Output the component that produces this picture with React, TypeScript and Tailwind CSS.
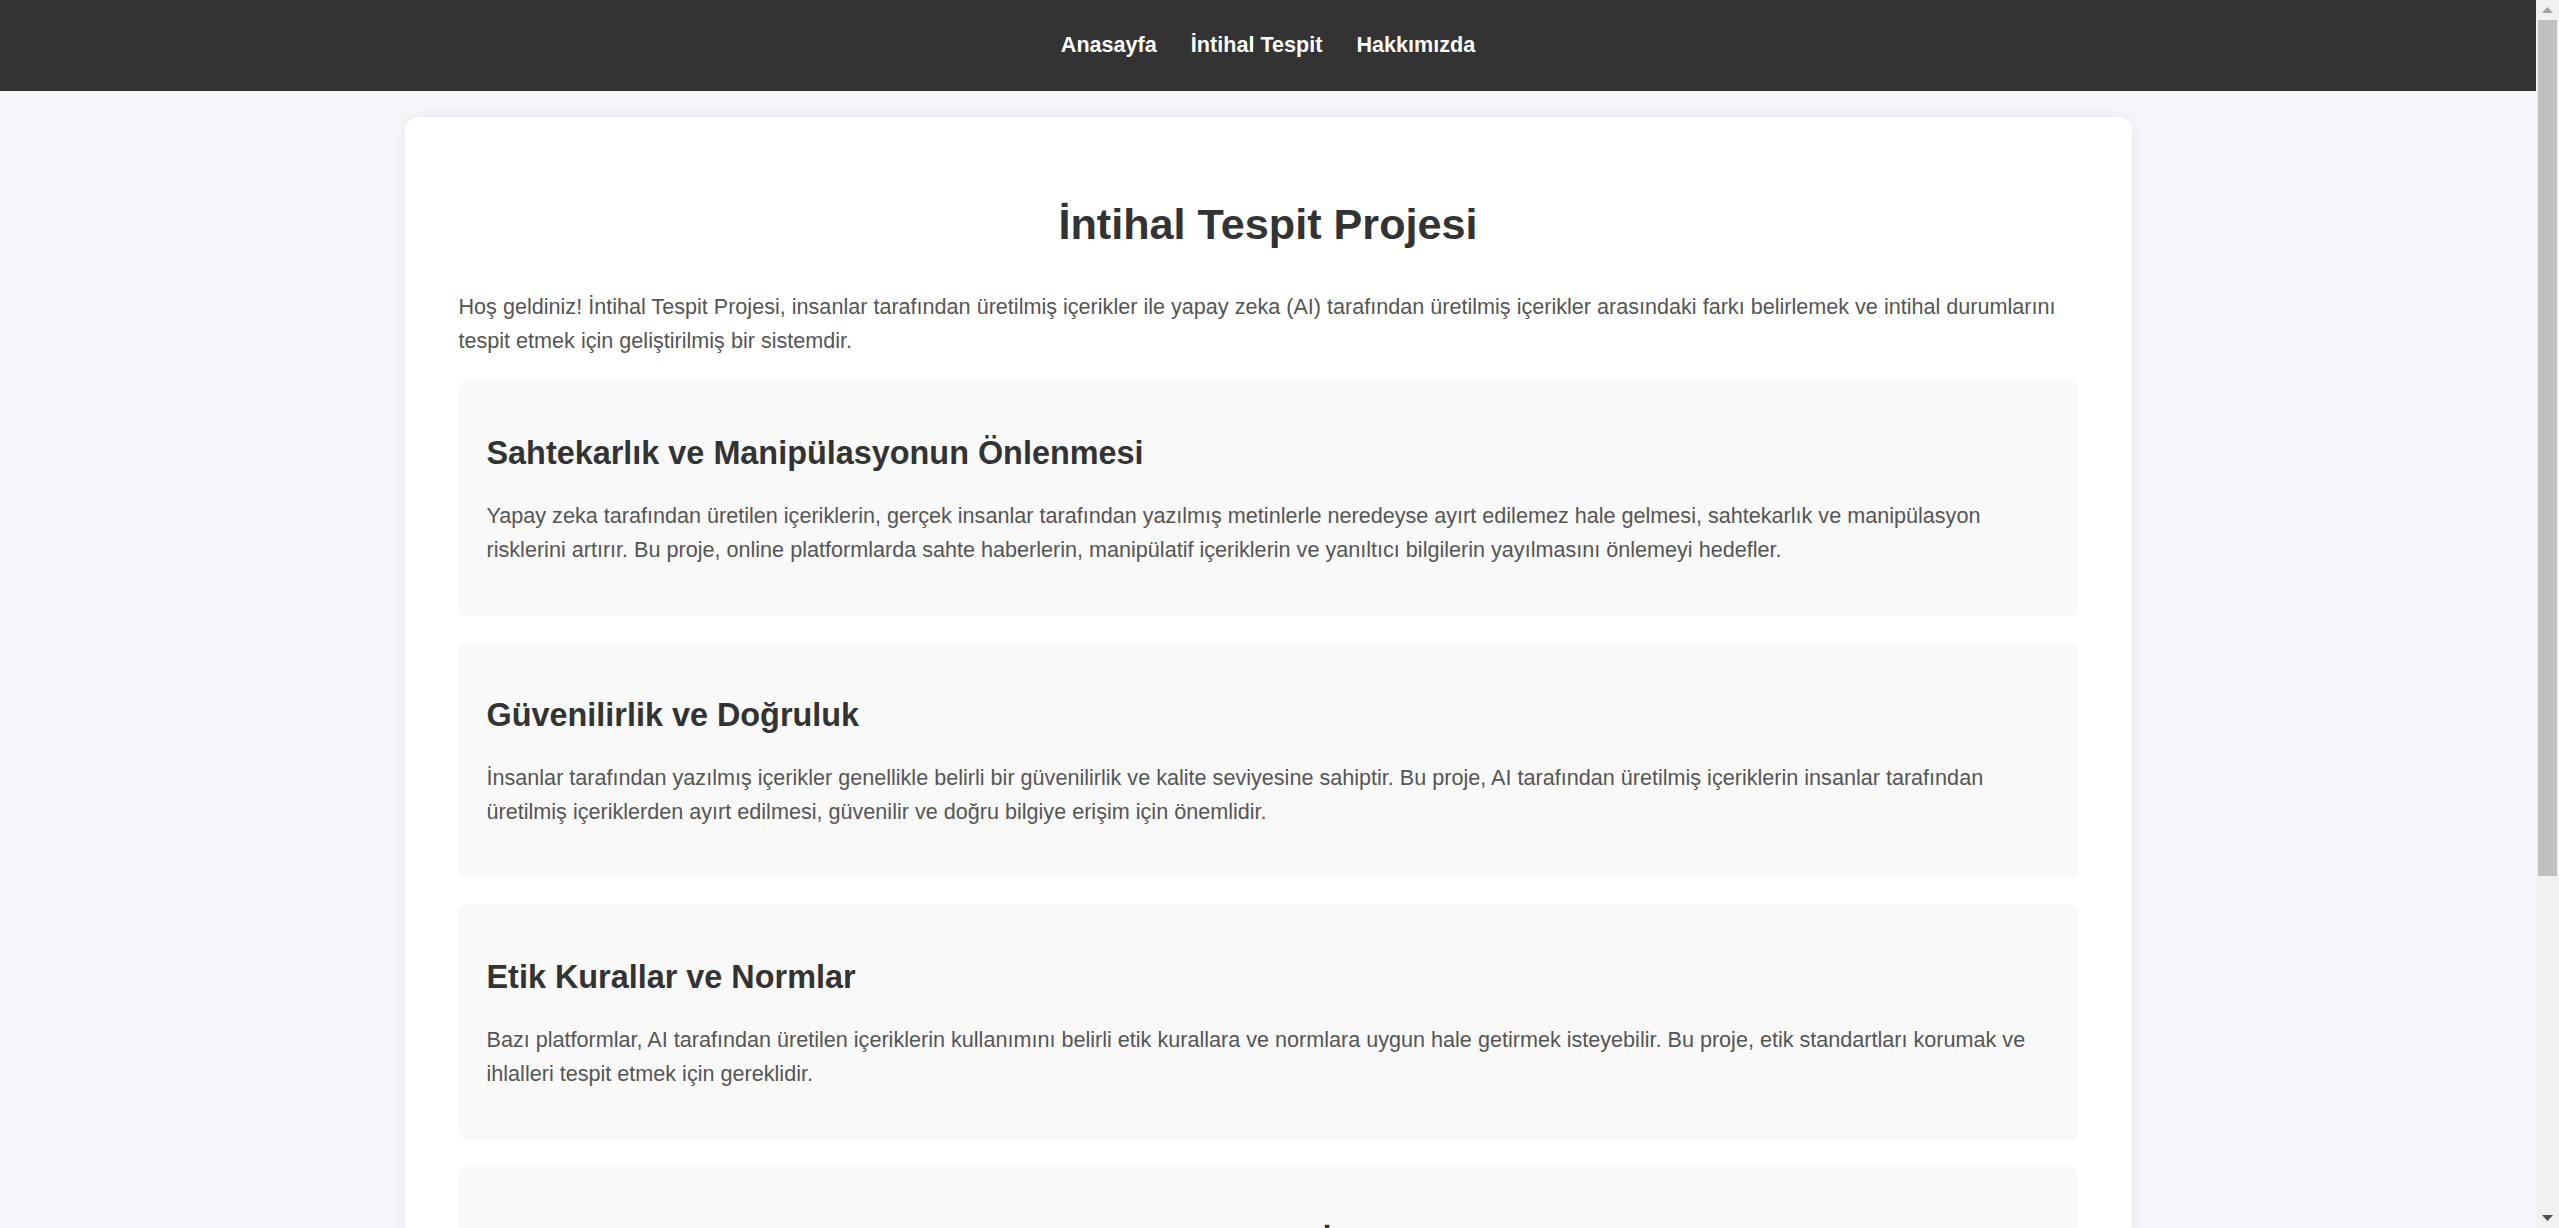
import React from "react";

const sections = [
  {
    title: "Sahtekarlık ve Manipülasyonun Önlenmesi",
    text: "Yapay zeka tarafından üretilen içeriklerin, gerçek insanlar tarafından yazılmış metinlerle neredeyse ayırt edilemez hale gelmesi, sahtekarlık ve manipülasyon risklerini artırır. Bu proje, online platformlarda sahte haberlerin, manipülatif içeriklerin ve yanıltıcı bilgilerin yayılmasını önlemeyi hedefler.",
    center: false,
  },
  {
    title: "Güvenilirlik ve Doğruluk",
    text: "İnsanlar tarafından yazılmış içerikler genellikle belirli bir güvenilirlik ve kalite seviyesine sahiptir. Bu proje, AI tarafından üretilmiş içeriklerin insanlar tarafından üretilmiş içeriklerden ayırt edilmesi, güvenilir ve doğru bilgiye erişim için önemlidir.",
    center: false,
  },
  {
    title: "Etik Kurallar ve Normlar",
    text: "Bazı platformlar, AI tarafından üretilen içeriklerin kullanımını belirli etik kurallara ve normlara uygun hale getirmek isteyebilir. Bu proje, etik standartları korumak ve ihlalleri tespit etmek için gereklidir.",
    center: false,
  },
  {
    title: "Telif Hakkı ve İhlaller",
    text: "Akademik ve yaratıcı çalışmalarda telif haklarının korunması büyük önem taşır. Bu proje, izinsiz kopyalanan ve yapay zeka ile yeniden üretilen içeriklerin tespit edilmesine yardımcı olur.",
    center: true,
  },
];

function Scrollbar() {
  return (
    <div className="w-[23px] shrink-0 h-full bg-[#f1f1f1] flex flex-col">
      <div className="h-[20px] flex items-center justify-center">
        <svg width="11" height="6" viewBox="0 0 11 6">
          <polygon points="5.5,0 11,6 0,6" fill="#a3a3a3" />
        </svg>
      </div>
      <div className="h-[856px] mx-[2px] bg-[#c1c1c1]" />
      <div className="flex-1" />
      <div className="h-[20px] flex items-center justify-center">
        <svg width="11" height="6" viewBox="0 0 11 6">
          <polygon points="0,0 11,0 5.5,6" fill="#505050" />
        </svg>
      </div>
    </div>
  );
}

export default function App() {
  return (
    <div className="flex h-screen overflow-hidden bg-[#f5f7fa] font-['Liberation_Sans',Arial,sans-serif]">
      <div className="flex-1 min-w-0 h-full overflow-hidden">
        <nav className="h-[91px] pb-[2px] bg-[#333333] flex items-center justify-center gap-[34px]">
          <a className="text-[21.6px] leading-[25px] font-bold text-white">Anasayfa</a>
          <a className="text-[21.6px] leading-[25px] font-bold text-white">İntihal Tespit</a>
          <a className="text-[21.6px] leading-[25px] font-bold text-white">Hakkımızda</a>
        </nav>
        <main className="w-[1727px] mx-auto mt-[26px] bg-white rounded-[13px] shadow-[0_0_14px_rgba(0,0,0,0.08)] px-[54px] pt-[83px] pb-[54px]">
          <h1 className="text-[43.2px] leading-[49.6px] font-bold text-[#333333] text-center">
            İntihal Tespit Projesi
          </h1>
          <p className="mt-[40px] text-[21.6px] leading-[34.56px] text-[#555555]">
            Hoş geldiniz! İntihal Tespit Projesi, insanlar tarafından üretilmiş içerikler ile yapay zeka (AI) tarafından üretilmiş içerikler arasındaki farkı belirlemek ve intihal durumlarını tespit etmek için geliştirilmiş bir sistemdir.
          </p>
          <div className="mt-[22px] flex flex-col gap-[27px]">
            {sections.map((s) => (
              <section
                key={s.title}
                className={
                  s.center
                    ? "bg-[#f9f9f9] rounded-[7px] px-[28px] pt-[57px] pb-[48px]"
                    : "bg-[#f9f9f9] rounded-[7px] px-[28px] pt-[53.9px] pb-[48px]"
                }
              >
                <h2
                  className={
                    s.center
                      ? "text-[32.4px] leading-[37.2px] font-bold text-[#333333] text-center"
                      : "text-[32.4px] leading-[37.2px] font-bold text-[#333333]"
                  }
                >
                  {s.title}
                </h2>
                <p className="mt-[26.9px] text-[21.6px] leading-[34.56px] text-[#555555]">
                  {s.text}
                </p>
              </section>
            ))}
          </div>
        </main>
      </div>
      <Scrollbar />
    </div>
  );
}
